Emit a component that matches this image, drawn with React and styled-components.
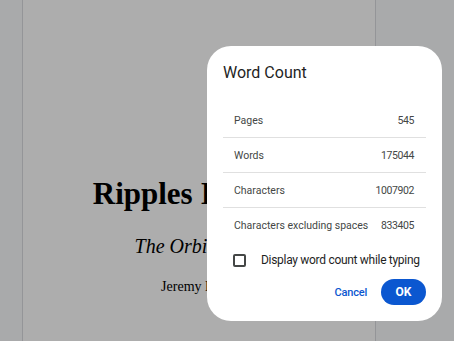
import React from "react";
import styled, { createGlobalStyle } from "styled-components";

const GlobalStyle = createGlobalStyle`
  html, body {
    margin: 0;
    padding: 0;
    background: #f9fbfd;
    font-family: Roboto, "Liberation Sans", sans-serif;
  }
  * { box-sizing: border-box; }
`;

const Screen = styled.div`
  position: relative;
  width: 454px;
  height: 341px;
  overflow: hidden;
  display: flex;
  background: #f9fbfd;
`;

const Gutter = styled.div`
  width: 22px;
  flex-shrink: 0;
`;

const Page = styled.div`
  width: 354px;
  flex-shrink: 0;
  background: #ffffff;
  border-left: 1px solid #dadce0;
  border-right: 1px solid #dadce0;
  display: flex;
  flex-direction: column;
  align-items: center;
  padding-top: 176px;
  font-family: "Liberation Serif", "DejaVu Serif", serif;
  color: #000;
`;

const DocTitle = styled.h1`
  margin: 0;
  font-size: 31px;
  line-height: 36px;
  font-weight: bold;
`;

const DocSubtitle = styled.h2`
  margin: 22px 0 0;
  font-size: 20px;
  line-height: 24px;
  font-style: italic;
  font-weight: normal;
`;

const DocAuthor = styled.p`
  margin: 20px 0 0;
  font-size: 14px;
  line-height: 18px;
`;

const Scrim = styled.div`
  position: absolute;
  inset: 0;
  background: rgba(0, 0, 0, 0.32);
`;

const Dialog = styled.div`
  position: absolute;
  left: 207px;
  top: 46px;
  width: 235px;
  height: 275px;
  background: #ffffff;
  border-radius: 24px;
  padding: 17px 16px 16px;
  display: flex;
  flex-direction: column;
`;

const Title = styled.div`
  font-size: 16px;
  line-height: 20px;
  color: #1f1f1f;
`;

const Table = styled.div`
  margin-top: 20px;
  display: flex;
  flex-direction: column;
`;

const Row = styled.div`
  height: 35px;
  display: flex;
  align-items: center;
  justify-content: space-between;
  padding: 0 12px 0 11px;
  font-size: 10.5px;
  color: #444746;
  white-space: nowrap;
  border-bottom: ${(p) => (p.$last ? "none" : "1px solid #e0e0e0")};
`;

const Value = styled.span`
  letter-spacing: -0.4px;
`;

const CheckRow = styled.label`
  height: 34px;
  display: flex;
  align-items: center;
  padding-left: 10px;
  font-size: 12px;
  letter-spacing: -0.3px;
  white-space: nowrap;
  color: #1f1f1f;
`;

const Box = styled.span`
  width: 13px;
  height: 13px;
  flex-shrink: 0;
  border: 2px solid #444746;
  border-radius: 2px;
  margin-right: 15px;
`;

const Actions = styled.div`
  margin-top: 2px;
  display: flex;
  justify-content: flex-end;
  align-items: center;
`;

const TextButton = styled.button`
  border: none;
  background: none;
  color: #0b57d0;
  font-family: inherit;
  font-size: 11px;
  font-weight: 500;
  letter-spacing: -0.2px;
  height: 26px;
  padding: 0 8px;
  margin-right: 6px;
`;

const FilledButton = styled.button`
  border: none;
  background: #0b57d0;
  color: #ffffff;
  font-family: inherit;
  font-size: 12px;
  font-weight: 700;
  width: 45px;
  height: 26px;
  border-radius: 13px;
`;

const stats = [
  ["Pages", "545"],
  ["Words", "175044"],
  ["Characters", "1007902"],
  ["Characters excluding spaces", "833405"],
];

export default function App() {
  return (
    <>
      <GlobalStyle />
      <Screen>
        <Gutter />
        <Page>
          <DocTitle>Ripples In Time</DocTitle>
          <DocSubtitle>The Orbitas Arc</DocSubtitle>
          <DocAuthor>Jeremy Lowe</DocAuthor>
        </Page>
        <Scrim />
        <Dialog>
          <Title>Word Count</Title>
          <Table>
            {stats.map(([label, value], i) => (
              <Row key={label} $last={i === stats.length - 1}>
                <span>{label}</span>
                <Value>{value}</Value>
              </Row>
            ))}
          </Table>
          <CheckRow>
            <Box />
            Display word count while typing
          </CheckRow>
          <Actions>
            <TextButton>Cancel</TextButton>
            <FilledButton>OK</FilledButton>
          </Actions>
        </Dialog>
      </Screen>
    </>
  );
}
